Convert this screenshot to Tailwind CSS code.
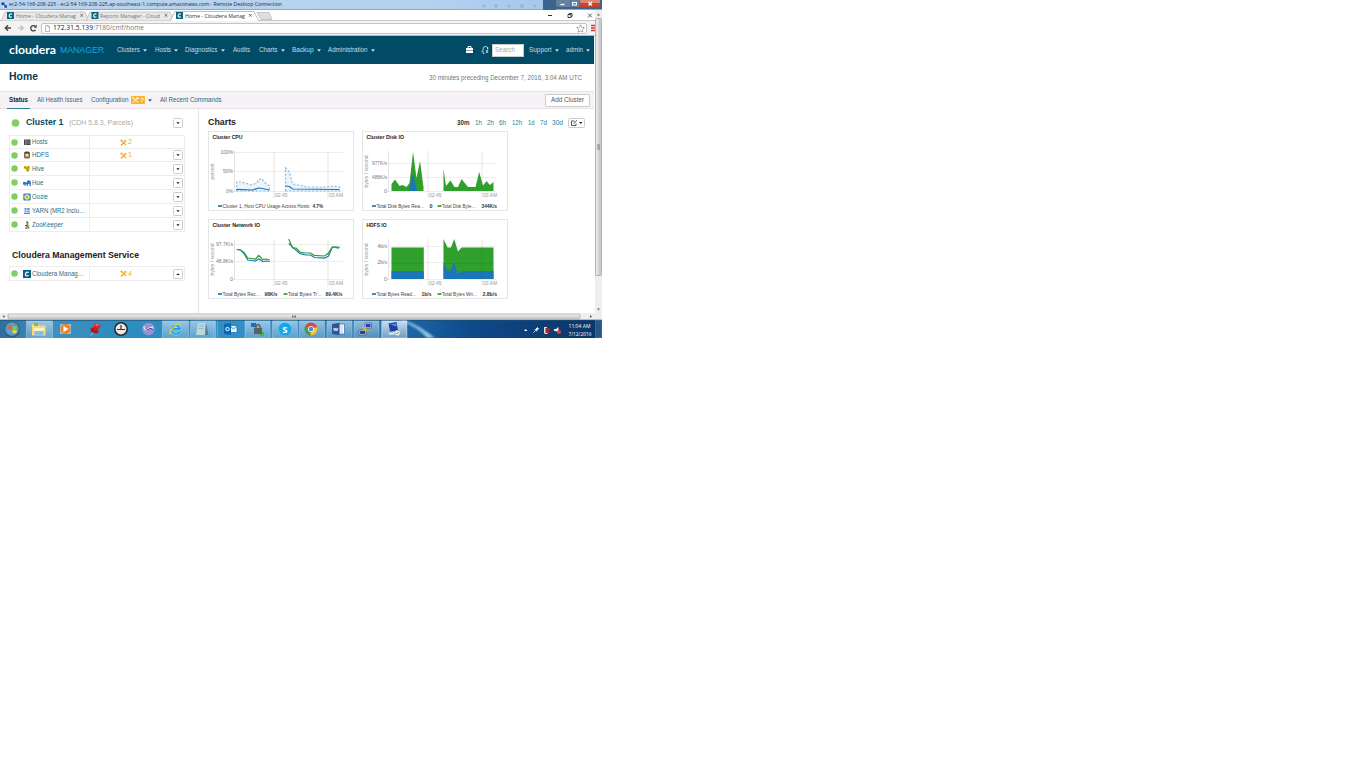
<!DOCTYPE html>
<html lang="en">
<head>
<meta charset="utf-8">
<title>Home - Cloudera Manager</title>
<script src="https://cdn.jsdelivr.net/npm/@tailwindcss/browser@4"></script>
</head>
<body class="bg-white">
<div class="w-[602px] h-[338px] overflow-hidden flex flex-col font-['Liberation_Sans',Arial,sans-serif] text-[6.6px] leading-[8px] text-[#2b6b85]">

  <!-- Remote desktop title bar -->
  <header class="h-[10px] shrink-0 flex items-center bg-gradient-to-r from-[#b9d3ec] via-[#b4d2f0] via-70% to-[#a3c4e8] border-b border-[#8fa9c4] font-['Open_Sans',sans-serif] text-[6px] text-[#1c2a3c]">
    <svg class="ml-px w-[7px] h-[8px] shrink-0" viewBox="0 0 7 8"><path d="M.5 1.500h3v2.500h-3z" fill="#1c3f99"/><path d="M3 4h3v3H3z" fill="#3c62b8"/><path d="M2 5l2 2H2z" fill="#eee"/></svg>
    <span class="ml-px w-[534px] shrink-0 flex items-center"><span data-w="273">ec2-54-169-208-225 - ec2-54-169-208-225.ap-southeast-1.compute.amazonaws.com - Remote Desktop Connection</span>
      <svg class="ml-auto mr-[2px] w-[60px] h-[8px]" viewBox="0 0 60 8" fill="#6d93bd" opacity=".35"><circle cx="3" cy="5" r="1.500"/><circle cx="15" cy="5" r="2"/><circle cx="28" cy="5" r="1.500"/><circle cx="41" cy="5" r="2"/><circle cx="54" cy="5" r="1.500"/></svg>
    </span>
    <span class="w-[13px] h-[10px] bg-[#3b648f] shrink-0"></span>
    <svg class="w-[46px] h-[9px] shrink-0 self-start" viewBox="0 0 46 9"><path d="M0 0h46v9H0z" fill="#3b648f"/><path d="M0 0h14v7H2Q0 7 0 5z" fill="#64819f"/><path d="M14.500 0h9v7h-9z" fill="#64819f"/><path d="M24 0h20v5q0 2-2 2H24z" fill="#c9432e"/><path d="M24 0h20v3H24z" fill="#dd8574"/><path d="M4.500 4.500h4" stroke="#fff" stroke-width="1.300"/><rect x="16.500" y="2.500" width="4" height="2.500" fill="none" stroke="#fff"/><path d="M32.500 2l3.500 3.500M36 2L32.500 5.500" stroke="#fff" stroke-width="1.200"/></svg>
  </header>

  <div class="flex h-[303px] shrink-0">
    <div class="w-[595px] shrink-0 flex flex-col">
      <!-- Browser tabs -->
      <div class="h-[11px] shrink-0 flex bg-white border-b border-[#c8c8c8]">
        <svg class="w-[275px] h-[11px]" viewBox="0 10 275 11">
          <path d="M1 21L5 12H85L89 21z" fill="#e8e8e8" stroke="#b5b5b5" stroke-width=".7"/>
          <path d="M86 21L90 12H170L174 21z" fill="#e8e8e8" stroke="#b5b5b5" stroke-width=".7"/>
          <path d="M257 12.500H269L272 19.500H261z" fill="#dedede" stroke="#b5b5b5" stroke-width=".7"/>
          <path d="M170 21.500L175 11.500H254L259 21.500z" fill="#fff" stroke="#a5a5a5" stroke-width=".7"/>
          <g id="tabIcons"></g>
          <g font-family="Open Sans" font-size="6">
            <text x="16" y="17.500" fill="#777" textLength="60" lengthAdjust="spacingAndGlyphs">Home - Cloudera Manag</text>
            <text x="100" y="17.500" fill="#777" textLength="60" lengthAdjust="spacingAndGlyphs">Reports Manager - Cloud</text>
            <text x="185" y="17.500" fill="#333" textLength="60" lengthAdjust="spacingAndGlyphs">Home - Cloudera Manag</text>
          </g>
          <path d="M80.300 14l2.700 2.700m0-2.700l-2.700 2.700M164.700 14l2.700 2.700m0-2.700l-2.700 2.700M249 14l2.700 2.700m0-2.700l-2.700 2.700" stroke="#555" stroke-width=".8"/>
        </svg>
        <svg class="ml-auto w-[55px] h-[10px]" viewBox="540 10 55 10"><path d="M548 15.500h4" stroke="#333"/><path d="M568 14.500h3v3h-3zM569 14.500v-1h3v3h-1" fill="none" stroke="#333" stroke-width=".9"/><path d="M588 13.500l4 4m0-4l-4 4" stroke="#333" stroke-width=".8"/></svg>
      </div>
      <!-- Address bar -->
      <div class="h-[15px] shrink-0 flex items-center bg-[#f3f3f3] border-b border-[#b5b5b5] font-['Open_Sans',sans-serif] text-[6.8px] text-[#777]">
        <svg class="w-[41px] h-[14px] shrink-0" viewBox="0 21 41 14"><path d="M11 28H5.500M8 25.300L5.300 28L8 30.700" fill="none" stroke="#444" stroke-width="1.300"/><path d="M17.500 28H23M20.500 25.300L23.200 28L20.500 30.700" fill="none" stroke="#bbb" stroke-width="1.200"/><path d="M35.500 26.500A2.700 2.700 0 1 0 35.500 30" fill="none" stroke="#444" stroke-width="1.300"/><path d="M36.700 24.800v3h-3z" fill="#444"/></svg>
        <div class="w-[546px] h-[11px] shrink-0 flex items-center bg-white border border-[#c4c4c4] rounded-[2px]">
          <svg class="ml-[3px] w-[5px] h-[7px]" viewBox="0 0 5 7"><path d="M.4.400h2.600l1.600 1.600v4.600H.4zM3 .4v1.600h1.600" fill="none" stroke="#999" stroke-width=".7"/></svg>
          <span class="ml-[3px] pt-px text-[#222]" data-w="40">172.31.5.139</span><span class="pt-px" data-w="51">:7180/cmf/home</span>
          <svg class="ml-auto w-[10px] h-[9px]" viewBox="0 0 10 9"><path d="M4.500.800l1.200 2.500 2.700.300-2 1.900.5 2.700-2.400-1.300-2.400 1.300.5-2.700-2-1.900 2.700-.3z" fill="#fff" stroke="#888" stroke-width=".7"/></svg>
        </div>
        <svg class="ml-[4px] w-[4px] h-[8px]" viewBox="0 0 4 8"><path d="M0 1.500h4M0 4h4M0 6.500h4" stroke="#d33c35" stroke-width="1.700"/></svg>
      </div>

      <!-- Application navigation -->
      <nav class="w-[594px] h-[28px] shrink-0 flex items-center bg-[#014b67] text-[#c7dbe3]">
        <span class="ml-[9px] w-[51px] shrink-0 flex pt-px text-[11px] font-bold text-white font-['Lato',sans-serif]"><span data-w="47">cloudera</span></span>
        <span class="w-[57px] shrink-0 flex pt-px text-[9px] text-[#19a7dd]"><span data-w="44">MANAGER</span></span>
        <span class="w-[38px] shrink-0 flex items-center"><span data-w="23">Clusters</span><i class="c"></i></span>
        <span class="w-[30px] shrink-0 flex items-center"><span data-w="16">Hosts</span><i class="c"></i></span>
        <span class="w-[48px] shrink-0 flex items-center"><span data-w="32.500">Diagnostics</span><i class="c"></i></span>
        <span class="w-[26px] shrink-0 flex items-center"><span data-w="17">Audits</span></span>
        <span class="w-[33px] shrink-0 flex items-center"><span data-w="18.500">Charts</span><i class="c"></i></span>
        <span class="w-[36px] shrink-0 flex items-center"><span data-w="21.500">Backup</span><i class="c"></i></span>
        <span class="w-[137px] shrink-0 flex items-center"><span data-w="39.500">Administration</span><i class="c"></i></span>
        <svg class="w-[27px] h-[10px] shrink-0" viewBox="465 45 27 10"><path d="M466 48h7v5h-7z" fill="#fff"/><path d="M468 48v-1.500h3V48" fill="none" stroke="#fff"/><path d="M466 50.500h7" stroke="#014b67" stroke-width=".5"/><path d="M482 51.500l1.200-1.500V48q.5-1.500 2.300-1.500T487.700 48v1M481.500 52h2.500M483 53.500h1.500M486 50l2 3m0-3l-2 3M487.700 47v2.500" fill="none" stroke="#dfeef4" stroke-width=".8"/></svg>
        <span class="w-[32px] h-[13px] shrink-0 bg-white border border-[#ccc] flex items-center pl-[2px] text-[#aaa]"><span data-w="20">Search</span></span>
        <span class="ml-[5px] w-[37px] shrink-0 flex items-center"><span data-w="22.500">Support</span><i class="c"></i></span>
        <span class="flex items-center"><span data-w="17">admin</span><i class="c"></i></span>
      </nav>

      <div class="w-[594px] h-[27px] shrink-0 flex items-center justify-between pl-[9px] pr-[12px] bg-white">
        <h1 class="flex text-[10.500px] font-bold text-[#0b3c52]"><span data-w="29">Home</span></h1>
        <span class="pt-px flex text-[#777]"><span data-w="153">30 minutes preceding December 7, 2016, 3:04 AM UTC</span></span>
      </div>

      <div class="w-[594px] h-[18px] shrink-0 flex items-center bg-[#f6f2f6] border-y border-[#e6e2e6]">
        <span class="ml-[7px] w-[23px] h-[17px] shrink-0 pl-[2px] flex items-center font-bold text-[#222] border-b border-[#2b7d9b] mr-[7px]"><span data-w="19">Status</span></span>
        <span class="w-[54px] shrink-0 flex"><span data-w="45.500">All Health Issues</span></span>
        <span class="w-[40px] shrink-0 flex"><span data-w="37.500">Configuration</span></span>
        <svg class="w-[14px] h-[8px] shrink-0" viewBox="0 0 14 8"><rect width="14" height="8" rx="1" fill="#f7b52c"/><path d="M2 1.500l5 5M7 1.500l-5 5M1.500 2.500l1.500-1.300M6.200 1v1.500h1.500" stroke="#fff" stroke-width="1" fill="none"/><text x="9.500" y="6.300" font-size="6" fill="#fff">7</text></svg>
        <i class="c"></i>
        <span class="ml-[8px] flex"><span data-w="61.500">All Recent Commands</span></span>
        <span class="ml-auto mr-[4px] w-[45px] h-[13px] shrink-0 flex items-center justify-center bg-white border border-[#ccc] rounded-[1px] text-[#555]"><span data-w="33">Add Cluster</span></span>
      </div>

      <!-- Page content -->
      <main class="w-[594px] h-[204px] flex bg-white">
        <section class="w-[199px] border-r border-[#e3e3e3] pl-[9px] shrink-0">
          <div class="mt-[5px] h-[18px] w-[176px] flex items-center">
            <svg class="ml-[2px] w-[9px] h-[8px]" viewBox="0 0 9 8"><circle cx="4.500" cy="4" r="3.800" fill="#7fcf65"/></svg>
            <span class="ml-[6px] w-[43px] flex text-[9.200px] font-bold text-[#0b4a66]"><span data-w="37.500">Cluster 1</span></span>
            <span class="flex text-[7.200px] text-[#aaa]"><span data-w="64">(CDH 5.8.3, Parcels)</span></span>
            <span class="b ml-auto mr-[2px]"></span>
          </div>
          <div id="services" class="mt-[3px] w-[176px] border-x border-t border-[#ededed]"></div>
          <h2 class="mt-[17px] ml-[3px] h-[12px] flex items-center text-[9.200px] font-bold text-[#222]"><span data-w="127">Cloudera Management Service</span></h2>
          <div id="mgmt" class="mt-[5px] w-[176px] border-x border-t border-[#ededed]"></div>
        </section>

        <section class="pl-[8.5px]">
          <div class="h-[22px] w-[378px] pt-[5px] flex items-center text-[#2b7d9b]">
            <h2 class="w-[249px] shrink-0 flex text-[9.200px] font-bold text-[#222]"><span data-w="28">Charts</span></h2>
            <span class="w-[18px] shrink-0 flex font-bold text-[#333]"><span data-w="12.500">30m</span></span>
            <span class="w-[12px] shrink-0 flex"><span data-w="7">1h</span></span>
            <span class="w-[12px] shrink-0 flex"><span data-w="7">2h</span></span>
            <span class="w-[13px] shrink-0 flex"><span data-w="7">6h</span></span>
            <span class="w-[16px] shrink-0 flex"><span data-w="10">12h</span></span>
            <span class="w-[12px] shrink-0 flex"><span data-w="6.500">1d</span></span>
            <span class="w-[12px] shrink-0 flex"><span data-w="7">7d</span></span>
            <span class="w-[16px] shrink-0 flex"><span data-w="11">30d</span></span>
            <svg class="w-[17px] h-[10px] shrink-0" viewBox="0 0 17 10"><rect x=".5" y=".5" width="16" height="9" rx="1" fill="#fff" stroke="#ccc"/><path d="M6.500 3H3.500v4.500H8V5.500M5.500 5.700L9 2.300" fill="none" stroke="#444" stroke-width=".9"/><path d="M11 4h3.400l-1.700 2z" fill="#222"/></svg>
          </div>
          <div id="charts" class="grid grid-cols-[146px_146px] gap-x-[8px] gap-y-[8px]"></div>
        </section>
      </main>
    </div>

    <!-- Vertical scrollbar -->
    <svg class="w-[7px] h-[303px] shrink-0" viewBox="595 10 7 303"><path d="M595 10h7v303h-7z" fill="#eee"/><path d="M597 15.500l1.500-2 1.500 2zM597 308.500l1.500 2 1.500-2z" fill="#666"/><rect x="595.500" y="18.500" width="6" height="257" rx="1" fill="#cbcbce" stroke="#999" stroke-width=".6"/><path d="M596 19h2.500v256H596z" fill="#e5e5e8"/><path d="M597 145h3M597 147h3M597 149h3" stroke="#666" stroke-width=".8"/></svg>
  </div>

  <!-- Horizontal scrollbar -->
  <svg class="w-[602px] h-[7px] shrink-0" viewBox="0 313 602 7"><path d="M0 313h602v7H0z" fill="#eee"/><path d="M4.500 315l-2 1.500 2 1.500zM590 315l2 1.500-2 1.500z" fill="#555"/><rect x="8" y="314" width="572" height="5" rx="1" fill="#d0d0d0" stroke="#aaa" stroke-width=".6"/><path d="M9 314.500h570v2H9z" fill="#e7e7e7"/><path d="M292 316.500h4" stroke="#666" stroke-width="2" stroke-dasharray="1 .5"/><path d="M0 319.700h602" stroke="#8b98a3" stroke-width=".7"/></svg>

  <!-- Taskbar -->
  <svg class="w-[602px] h-[18px] shrink-0" viewBox="0 320 602 18">
    <defs>
      <linearGradient id="bar"><stop offset="0" stop-color="#2c6f9c"/><stop offset=".07" stop-color="#4290bd"/><stop offset=".2" stop-color="#2d8cc0"/><stop offset=".45" stop-color="#368fc6"/><stop offset=".58" stop-color="#2c7db8"/><stop offset=".68" stop-color="#1c65a6"/><stop offset=".78" stop-color="#0e4a8a"/><stop offset="1" stop-color="#0b3467"/></linearGradient>
      <linearGradient id="btn" x2="0" y2="1"><stop stop-color="#fff" stop-opacity=".5"/><stop offset="1" stop-color="#fff" stop-opacity=".18"/></linearGradient>
      <filter id="soft"><feGaussianBlur stdDeviation="1"/></filter>
    </defs>
    <path d="M0 320h602v18H0z" fill="url(#bar)"/>
    <path d="M0 320h602v1H0z" fill="#1d4d75" opacity=".6"/>
    <path d="M404 320q18 7 31 18h-8q-8-10-27-18z" fill="#a8d4f0" opacity=".85" filter="url(#soft)"/>
    <g fill="url(#btn)" stroke="#b9dcf0" stroke-opacity=".6" stroke-width=".7">
      <path d="M26.500 321h26v17h-26zM162.500 321h26v17h-26zM190.500 321h25v17h-25zM245 321h25v17h-25zM272.500 321h25v17h-25zM299.500 321h25v17h-25zM327 321h25v17h-25zM354 321h25v17h-25zM381.500 321h25v17h-25z"/><path d="M382 321h25v17h-25z"/>
    </g>
    <path d="M213.500 321v17M217.500 321v17" stroke="#b9dcf0" stroke-width=".5" opacity=".6"/>
    <circle cx="12" cy="329.500" r="8" fill="#2b6088"/><circle cx="12" cy="329" r="6.800" fill="#5f9cbd"/>
    <path d="M8 326.500q2-1.500 4-.5v3q-2-1-4 0z" fill="#e9602b"/><path d="M12.500 326q2 1 4 0v3q-2 1-4 0z" fill="#93c83d"/><path d="M8 329.800q2-1 4 0v3q-2-1-4 0z" fill="#49a9e4"/><path d="M12.500 329.800q2 1 4 0v3q-2 1-4 0z" fill="#fbd13b"/>
    <path d="M32 324h6l1 1.500h6.500v10H32z" fill="#f3dc82"/><path d="M34 323h4v3h-4z" fill="#83b75b"/><path d="M34.500 331h9v4.500h-9z" fill="#7fc1e6"/><path d="M34 328h10v3H34z" fill="#fff2bb"/>
    <path d="M60 324h11v10H60z" fill="#9dbfd5"/><circle cx="65.500" cy="329" r="5" fill="#f08223"/><path d="M63.500 326l5 3-5 3z" fill="#fff"/>
    <path d="M94 332l-3.500 3.500" stroke="#ccc" stroke-width=".8"/><ellipse cx="94.500" cy="330.500" rx="4.200" ry="2.600" transform="rotate(25 94.500 330.500)" fill="#b51519"/><path d="M94 326h5l-1 5h-4.500z" fill="#c61d20"/><ellipse cx="97" cy="325.500" rx="3.500" ry="2.300" transform="rotate(15 97 325.500)" fill="#dc2a2b"/><ellipse cx="97" cy="324.800" rx="1.800" ry="1" fill="#f07771"/>
    <circle cx="121" cy="329" r="6.200" fill="#ecebe4" stroke="#242c34" stroke-width="1.600"/><path d="M117 329.500h8M121 325v4.500" stroke="#333" stroke-width="1.200"/>
    <circle cx="148.500" cy="329" r="6.200" fill="#9793d4"/><path d="M144 326.500q1 4 4 2.500t5-1.500" stroke="#e9e7fa" stroke-width="1.800" fill="none"/><path d="M145 327.500q2 3.500 4 1.500t4 1" stroke="#4c3a95" fill="none"/>
    <g fill="none"><path d="M179.500 332a4.200 4.200 0 1 1 .5-3.200H172.500" stroke="#8fdcff" stroke-width="3"/><path d="M179.500 332a4.200 4.200 0 1 1 .5-3.200H172.500" stroke="#1d9be0" stroke-width="1.700"/><path d="M170.500 334.500q-2-2 3-7t8-3.500" stroke="#f3c830" stroke-width="1.300"/></g>
    <path d="M198 323h8l-1 12h-9z" fill="#b8d8dc"/><path d="M206 323l2.500 12H205z" fill="#4f7f8e"/><path d="M199 326h5M198.500 328.500h5" stroke="#73a5b0" stroke-width=".6"/>
    <path d="M230 325.500h7v7h-7z" fill="#eef6fc" stroke="#0072c6" stroke-width=".7"/><path d="M230 326l3.500 3 3.500-3" stroke="#0072c6" fill="none" stroke-width=".8"/><path d="M224 324l7-1v12l-7-1z" fill="#0768b4"/><circle cx="227.500" cy="329" r="1.700" fill="none" stroke="#fff"/>
    <path d="M251 323h5v4h-5z" fill="#2a6bb7"/><path d="M259 332h5v3.500h-5z" fill="#43b33e"/><path d="M254 328h8v6h-8z" fill="#5d625f"/><path d="M256 328v-2q2-3 4 0v2" fill="none" stroke="#555" stroke-width="1.300"/>
    <circle cx="285" cy="329" r="6.300" fill="#12a9e9"/><text x="282.300" y="332.500" font-family="Open Sans" font-size="9.500" font-weight="700" fill="#fff">S</text>
    <circle cx="311" cy="329" r="6.400" fill="#e54234"/><path d="M311 329L305.500 325.800A6.400 6.400 0 0 0 310.500 335.400z" fill="#37a34c"/><path d="M311 329L317 327A6.400 6.400 0 0 1 310.500 335.400z" fill="#f7c92d"/><circle cx="311" cy="329" r="3" fill="#fff"/><circle cx="311" cy="329" r="2.300" fill="#4688e8"/>
    <path d="M338 324h6.500v10H338z" fill="#f4f7fc" stroke="#2b579a" stroke-width=".6"/><path d="M339 326h4M339 328h4M339 330h4M339 332h4" stroke="#8ca5cc" stroke-width=".5"/><path d="M332 324l7.500-1.200v12.500L332 334z" fill="#2b579a"/><text x="333.300" y="331.300" font-size="6" font-weight="700" fill="#fff">w</text>
    <path d="M365 323h6.500v5H365zM359 330h7v5h-7z" fill="#bac6d5" stroke="#444" stroke-width=".5"/><path d="M366 324h4.500v3H366zM360 331h5v3h-5z" fill="#2442b5"/><path d="M361 326.500l5 1-1 1.500 4.500 1.500-6-.3 1-1.500z" fill="#fce12c" stroke="#c4a614" stroke-width=".5"/>
    <path d="M388.500 323.500l8-1.500 1.500 8.500-8 1z" fill="#203ca6"/><path d="M390 324.500l6-1 .5 3z" fill="#5d90df"/><path d="M388 333l8-1 1 2-7 1z" fill="#dbe2e8"/><circle cx="397.500" cy="333" r="2.800" fill="#e7eee7" stroke="#888" stroke-width=".4"/><path d="M396 333l1 1 2-2" stroke="#38913a" fill="none" stroke-width=".7"/>
    <path d="M524 331l1.700-2 1.700 2z" fill="#fff"/>
    <path d="M533.500 332.500l2-2M535 329.500l2 2M535.500 329.500l2-2 1 1-1.500 2z" fill="#e8edf2" stroke="#e8edf2" stroke-width=".9"/>
    <path d="M544 327h3v6h-3z" fill="#ddd"/><path d="M545.500 328h4v5h-4z" fill="#a3282b"/><path d="M544.500 333.500h3" stroke="#ddd"/>
    <path d="M554 329h2l2.500-2v6l-2.500-2h-2z" fill="#eee"/><circle cx="559" cy="332" r="2" fill="#df3e37"/>
    <g font-family="Open Sans" font-size="5.800" fill="#fff"><text x="568.500" y="328" textLength="22" lengthAdjust="spacingAndGlyphs">11:04 AM</text><text x="568.500" y="335.500" textLength="23" lengthAdjust="spacingAndGlyphs">7/12/2016</text></g>
    <path d="M595.500 320.500h6v17h-6z" fill="#245689" stroke="#4a7eae" stroke-width=".6"/>
  </svg>
</div>

<script>
// Caret and drop-down button markup
document.querySelectorAll('i.c').forEach(e => {
  e.className = 'block w-[7px] pl-[3px] pt-px shrink-0';
  e.innerHTML = '<svg class="block w-[4px] h-[3px]" viewBox="0 0 4 3"><path d="M0 .3h4L2 2.700z" fill="currentColor"/></svg>';
});
const btn = up => `<svg class="block w-[10px] h-[10px]" viewBox="0 0 10 10"><rect x=".5" y=".5" width="9" height="9" rx="1" fill="#fff" stroke="#ccc"/><path d="${up ? 'M3.400 5.900h3.200L5 4.200z' : 'M3.400 4.300h3.200L5 6z'}" fill="#111"/></svg>`;
document.querySelector('.b').innerHTML = btn(false);

// Service rows
const cIcon = '<path d="M0 0h8v8H0z" fill="#07617f"/><path d="M5.700 2.700Q3 1.300 2.500 4T5.700 5.500" fill="none" stroke="#fff" stroke-width="1.300"/>';
const icons = {
  hosts: '<path d="M1 1.500h6.500v5.500H1z" fill="#444"/><path d="M3 3.200h4.500M3 5.200h4.500" stroke="#bbb" stroke-width=".5"/><path d="M2.700 1.500v5.500" stroke="#ddd" stroke-width=".5"/>',
  hdfs: '<rect x="1" y=".5" width="6" height="7" rx="1.500" fill="#85683f"/><path d="M2.500 3h3v2.500h-3z" fill="#e8e0cf"/><path d="M2 1.500h4" stroke="#433" stroke-width=".7"/>',
  hive: '<path d="M.5 2l2-1.200L4 1.500 6 .8l1.500 2-1 2-1 2.200-2-.5L2.500 4 1 4z" fill="#e8d11d"/><path d="M1 1.500l2.500 2M5.500 1L4.500 3.500M3.500 5h2.500" stroke="#504b12" stroke-width=".8"/>',
  hue: '<path d="M0 6V3.200Q2 2 3 3.500H4V2l1.500-.8Q8 1.500 7.800 4v3H6.500V5H5V6.800H3.800V5.400H2.500V6.800H1.300V5z" fill="#2b76c1"/>',
  oozie: '<rect x=".3" y=".5" width="7.400" height="7" rx="1" fill="#3c81d0"/><circle cx="4" cy="4" r="2.600" fill="#f4ee54"/><circle cx="4" cy="4" r="1" fill="#6b91a7"/>',
  yarn: '<path d="M1.500 1h2v2h-2zM4.200 1h2.500v2H4.200zM1.500 3.500h2v2h-2zM4.200 3.500h2.500v2H4.200z" fill="#5c96e6"/><path d="M1 6.500h6" stroke="#6786aa" stroke-width="1"/>',
  zk: '<path d="M4 .5l1.500 1-.8 5H3z" fill="#7c8b49"/><path d="M3 1h2M2 7h4M2 4.500h2" stroke="#493f25" stroke-width=".9"/><path d="M5.800 4v3" stroke="#3c9a3d" stroke-width=".8"/>',
  cm: cIcon
};
const row = (h, icon, name, w, n, drop) => `
  <div class="flex items-center border-b border-[#ededed]" style="height:${h}px">
    <svg class="ml-[1px] w-[7px] h-[7px] shrink-0" viewBox="0 0 7 7"><circle cx="3.500" cy="3.500" r="3.200" fill="#7fcf65"/></svg>
    <svg class="ml-[5px] w-[8px] h-[8px] shrink-0" viewBox="0 0 8 8">${icons[icon]}</svg>
    <span class="ml-[1px] w-[58px] shrink-0 self-stretch border-r border-[#eee] flex items-center"><span data-w="${w}">${name}</span></span>
    <span class="ml-[30px] w-[14px] shrink-0 flex items-center text-[#f0b040]">${n ? `<svg class="w-[7px] h-[7px] mr-px" viewBox="0 0 7 7"><path d="M1 1l5 5M6 1.500L1.500 6M.5 2L2 .7M5 .7v1.300h1.500M.8 5.500l1 1" stroke="#f3a82b" stroke-width="1.100" fill="none"/></svg><span data-w="4">${n}</span>` : ''}</span>
    <span class="ml-auto mr-[1px]">${drop ? btn(drop === 'up') : ''}</span>
  </div>`;
document.getElementById('services').innerHTML =
  row(13, 'hosts', 'Hosts', 15.5, 2) + row(13, 'hdfs', 'HDFS', 17, 1, 'down') + row(14, 'hive', 'Hive', 12, 0, 'down') +
  row(14, 'hue', 'Hue', 11.5, 0, 'down') + row(14, 'oozie', 'Oozie', 16, 0, 'down') +
  row(14.3, 'yarn', 'YARN (MR2 Inclu…', 53, 0, 'down') + row(14, 'zk', 'ZooKeeper', 31, 0, 'down');
document.getElementById('mgmt').innerHTML = row(14, 'cm', 'Cloudera Manag…', 52, 4, 'up');
document.getElementById('tabIcons').innerHTML = [7, 91.500, 176].map(x => `<g transform="translate(${x} 12) scale(.87)">${cIcon}</g>`).join('');

// Chart cards, drawn in a 146 x 80 coordinate system per card
const t = (x, y, s, w, extra = '') => `<text x="${x}" y="${y}" textLength="${w}" lengthAdjust="spacingAndGlyphs" ${extra}>${s}</text>`;
const card = (title, tw, unit, uw, ticks, body, legend) => `
  <div class="w-[146px] h-[80px] border border-[#e6e6e6]">
  <svg class="w-[144px] h-[78px] block" viewBox="1 1 144 78" font-family="Liberation Sans" font-size="5">
    ${t(4.5, 8, title, tw, 'font-size="5.800" font-weight="700" fill="#222"')}
    <text transform="translate(6 ${40.5 + uw / 2}) rotate(-90)" textLength="${uw}" fill="#999" font-size="5">${unit}</text>
    ${ticks.map(k => `<path d="M25 ${k[0]}.500H135" stroke="#e6e6e6" stroke-width=".7"/><text x="25" y="${k[0] + 2}" text-anchor="end" textLength="${k[2]}" lengthAdjust="spacingAndGlyphs" fill="#777">${k[1]}</text>`).join('')}
    <path d="M26.500 20V61M66 20V67M120 20V67" stroke="#d8d8d8" stroke-width=".7"/>
    ${t(67, 66, '02:45', 12.5, 'fill="#999"')}${t(121, 66, '03 AM', 14, 'fill="#999"')}
    <g transform="translate(-.5 0)">${body}</g>
    ${legend.map(l => `<path d="M${l[0] - .5} 75h4" stroke="${l[1]}" stroke-width="1.700"/>${t(l[0] + 4, 76.700, l[2], l[3], 'fill="#444"')}${t(l[4] - .5, 76.700, l[5], l[6], 'font-weight="700" fill="#333"')}`).join('')}
  </svg></div>`;
const B = '#1a75bb', G = '#2fa02b';
const line = (c, p, e = '') => `<polyline points="${p}" fill="none" stroke="${c}" stroke-width="1.200" ${e}/>`;
const area = (c, p) => `<polygon points="${p}" fill="${c}"/>`;
const dash = 'stroke-dasharray="2 1.800"';
document.getElementById('charts').innerHTML =
  card('Cluster CPU', 30, 'percent', 16, [[21, '100%', 12.5], [40, '50%', 10], [60, '0%', 7]],
    area('#edf3f8', '29,60 29,51 34,51 44,54 49,52 51,49 54,47.500 58,52 62,55 62,60') +
    area('#edf3f8', '78,60 78,37 82,41 85,53 91,54 100,56 118,56 125,55 132,56 132,60') +
    line('#85bbe4', '29,60 29,51 34,51 44,54 49,52 51,49 54,47.500 58,52 62,55 62,60 29,60', dash) +
    line('#85bbe4', '78,60 78,37 82,41 85,53 91,54 100,56 118,56 125,55 132,56 132,60 78,60', dash) +
    line(B, '29,58.300 45,59 51,57 55,57.500 62,59') + line(B, '78,55 82,55.500 85,58 132,58.500'),
    [[10.500, B, 'Cluster 1, Host CPU Usage Across Hosts', 87, 105, '4.7%', 10.500]]) +
  card('Cluster Disk IO', 37.5, 'bytes / second', 32, [[32, '977K/s', 15], [46, '488K/s', 15], [60, '0', 3]],
    area(G, '30,60 30,53 33.500,48.500 38,55 41,54 45,56 48,52 51.500,21 55,47 58.500,30 62,56 62,60') +
    area(B, '47.500,60 51.500,42 55.500,60') +
    area(G, '82,60 82,38 84.500,55 89,49.500 93,56 96.500,56 100,48 106.500,56 114,56 117.700,41 121.500,54.500 125,50 128.300,54 132,51 132,60'),
    [[10.500, B, 'Total Disk Bytes Rea…', 48, 68, '0', 3], [76, G, 'Total Disk Byte…', 34, 120, '344K/s', 15.500]]) +
  card('Cluster Network IO', 47.5, 'bytes / second', 32, [[25, '97.7K/s', 17], [42, '48.8K/s', 17], [60, '0', 3]],
    line(B, '29.300,30.500 33,31 36.500,34.500 40.300,41 48,42 51.300,40 55,42.500 59,42 62.300,42.500') +
    line(G, '29.300,30.500 33,31 36.500,33.500 40.300,39 48,40 51.300,36.500 55,40.500 59,40 62.300,41') +
    line(B, '81.300,24.500 85,28 92.300,34.500 98,36 103,36 107,38.500 117,39.200 121,37 124.700,28.500 128,28 130,29 132,28.500') +
    line(G, '81.300,20 85,29 88.700,29 92.300,33 96,33.800 103,34 106.700,36.300 117,37 121,34 124.700,28 132,28'),
    [[10.500, B, 'Total Bytes Rec…', 38, 57, '98K/s', 13], [76, G, 'Total Bytes Tr…', 34, 118, '89.4K/s', 17]]) +
  card('HDFS IO', 20, 'bytes / second', 32, [[27, '4b/s', 9.5], [43, '2b/s', 9.5], [60, '0', 3]],
    area(G, '30,60 30,28.500 62.300,28.500 62.300,60') + area(B, '30,60 30,52 62.300,52 62.300,60') +
    area(G, '82,60 82,20 86,28.500 89.500,28.500 92.700,20 96.500,32.500 100,28.500 132,28.500 132,60') +
    area(B, '82,60 82,43 85.500,51.500 89,51.500 92.700,43 96,55 100,52 132,52 132,60') +
    '<path d="M30 44.500H62M82 44.500h50M120.500 28.500V60" stroke="#1d7d28" stroke-width=".5" opacity=".5"/>',
    [[10.500, B, 'Total Bytes Read…', 40, 60, '1b/s', 10], [76, G, 'Total Bytes Wri…', 35.500, 121, '2.8b/s', 14.500]]);

// Draw each label as text fitted to its width
document.querySelectorAll('[data-w]').forEach(e => {
  const w = e.dataset.w, s = e.textContent;
  e.classList.add('block', 'shrink-0');
  e.innerHTML = `<svg class="block h-[1.2em] overflow-visible" width="${w}"><text x="0" y=".9em" textLength="${w}" lengthAdjust="spacingAndGlyphs" fill="currentColor">${s}</text></svg>`;
});
</script>
</body>
</html>
